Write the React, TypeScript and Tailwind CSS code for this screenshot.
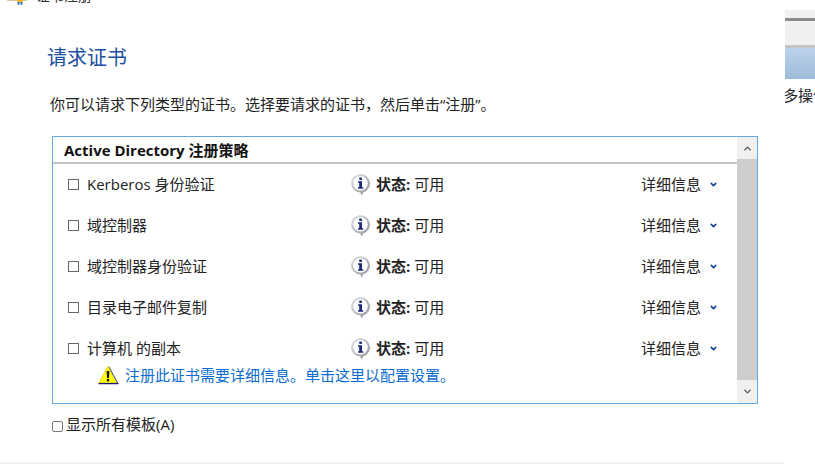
import { ChevronDown, ChevronUp } from 'lucide-react';

const FONT = '"Open Sans", "Noto Sans CJK SC", sans-serif';

const rows = ['Kerberos 身份验证', '域控制器', '域控制器身份验证', '目录电子邮件复制', '计算机 的副本'];

const InfoIcon = () => (
    <svg width="22" height="22" viewBox="0 0 22 22" className="shrink-0">
        <defs>
            <linearGradient id="rim" x1="0" y1="0" x2="1" y2="1">
                <stop offset="0" stopColor="#e4e4ea" />
                <stop offset="1" stopColor="#8e8e98" />
            </linearGradient>
        </defs>
        <path d="M1 9.5a9.5 9.2 0 1 1 12.5 8.7L11.5 21.5l-1.3-3A9.5 9.2 0 0 1 1 9.5z" fill="url(#rim)" />
        <circle cx="10.5" cy="9.3" r="7.2" fill="#fff" />
        <rect x="9.2" y="3.4" width="2.8" height="2.6" rx="0.8" fill="#1b2a7b" />
        <path d="M8 7.2h4v6h1.3v1.6H8v-1.6h1.2V8.8H8z" fill="#1b2a7b" />
    </svg>
);

const WarnIcon = () => (
    <svg width="21" height="20" viewBox="0 0 21 20" className="shrink-0">
        <path d="M10 1L19 18H1z" fill="#ffff00" stroke="#d8c800" strokeWidth="0.6" />
        <path d="M0.5 18.6h20" stroke="#1a1a7e" strokeWidth="1.3" />
        <path d="M19.8 18.2L11 2" stroke="#4a4a8e" strokeWidth="1" />
        <path d="M8.6 6h2.8l-.5 7H9.1z" fill="#111" />
        <rect x="8.9" y="14" width="2.2" height="2.4" fill="#111" />
    </svg>
);

const CertIcon = () => (
    <svg width="22" height="6" viewBox="0 0 22 6" className="shrink-0">
        <rect x="0" y="0" width="20" height="1.5" fill="#b98a3c" />
        <circle cx="13" cy="0.5" r="3.2" fill="#f0b81c" />
        <rect x="10.5" y="3" width="2" height="2.6" fill="#2f6fc4" />
        <rect x="13.5" y="3" width="2" height="2.6" fill="#2f6fc4" />
    </svg>
);

const Row = ({ name, warn }: { name: string; warn?: boolean }) => (
    <div className="h-[41px] shrink-0">
        <div className="flex h-[41px] items-center text-[15px] text-[#222]">
            <div className="ml-[15px] h-[11px] w-[11px] shrink-0 border border-[#666]" />
            <div className="ml-[8px] w-[263px] shrink-0 whitespace-nowrap">{name}</div>
            <InfoIcon />
            <div className="ml-[4px] w-[265px] shrink-0 whitespace-nowrap">
                <b className="font-bold">状态:</b> 可用
            </div>
            <div className="whitespace-nowrap">详细信息</div>
            <ChevronDown size={9} strokeWidth={4} className="ml-[8px] text-[#0b3a9e]" />
        </div>
        {warn && (
            <div className="-mt-[5px] ml-[45px] flex items-center gap-[6px] text-[15px] text-[#0a6cce]">
                <WarnIcon />
                <span className="whitespace-nowrap">注册此证书需要详细信息。单击这里以配置设置。</span>
            </div>
        )}
    </div>
);

export default function App() {
    return (
        <div className="relative h-[464px] w-[815px] overflow-hidden bg-white" style={{ fontFamily: FONT }}>
            {/* window title, cut off by the top of the crop */}
            <div className="absolute left-[7px] top-[-13px] flex items-end gap-[7px] text-[14px] leading-[18px] text-[#333]">
                <CertIcon />
                <span>证书注册</span>
            </div>

            {/* neighbouring window at the right edge */}
            <div className="absolute left-[785px] top-[10px] w-[30px] overflow-hidden">
                <div className="h-[8px] bg-[#f0f0f0]" />
                <div className="h-[3px] bg-[#8c8c8c]" />
                <div className="h-[24px] bg-[#f0f0f0]" />
                <div className="h-[3px] bg-[#c4c4c4]" />
                <div className="h-[31px] bg-gradient-to-b from-[#bcd2ea] to-[#9dbbd9]" />
                <div className="-ml-[2px] mt-[5px] whitespace-nowrap text-[15px] text-[#222]">多操作</div>
            </div>

            <div className="pl-[47px] pt-[44px]">
                <h1 className="text-[20px] leading-[28px] font-normal text-[#1a4fa0]">请求证书</h1>
                <p className="ml-[3px] mt-[20px] text-[15px] leading-[24px] text-[#222]">
                    你可以请求下列类型的证书。选择要请求的证书，然后单击“注册”。
                </p>

                <div className="ml-[5px] mt-[20px] flex h-[268px] w-[706px] border border-[#66a8e0]">
                    <div className="min-w-0 flex-1">
                        <div className="h-[27px] border-b-2 border-[#c4c4c4] pl-[11px] text-[15px] leading-[26px] font-bold text-[#111]">
                            Active Directory 注册策略
                        </div>
                        <Row name={rows[0]} />
                        <Row name={rows[1]} />
                        <Row name={rows[2]} />
                        <Row name={rows[3]} />
                        <Row name={rows[4]} warn />
                    </div>
                    <div className="flex w-[20px] shrink-0 flex-col bg-[#f0f0f0]">
                        <div className="flex h-[22px] items-center justify-center text-[#555]">
                            <ChevronUp size={11} strokeWidth={3} />
                        </div>
                        <div className="flex-1 bg-[#cdcdcd]" />
                        <div className="flex h-[23px] items-center justify-center text-[#555]">
                            <ChevronDown size={11} strokeWidth={3} />
                        </div>
                    </div>
                </div>

                <div className="ml-[5px] mt-[9px] flex items-center gap-[3px] text-[15px] leading-[22px] text-[#222]">
                    <div className="mt-[4px] h-[11px] w-[11px] rounded-[2px] border border-[#777]" />
                    <span>显示所有模板(A)</span>
                </div>
            </div>

            <div className="absolute bottom-0 left-0 h-[2px] w-[784px] bg-[#f0f0f0]" />
        </div>
    );
}
